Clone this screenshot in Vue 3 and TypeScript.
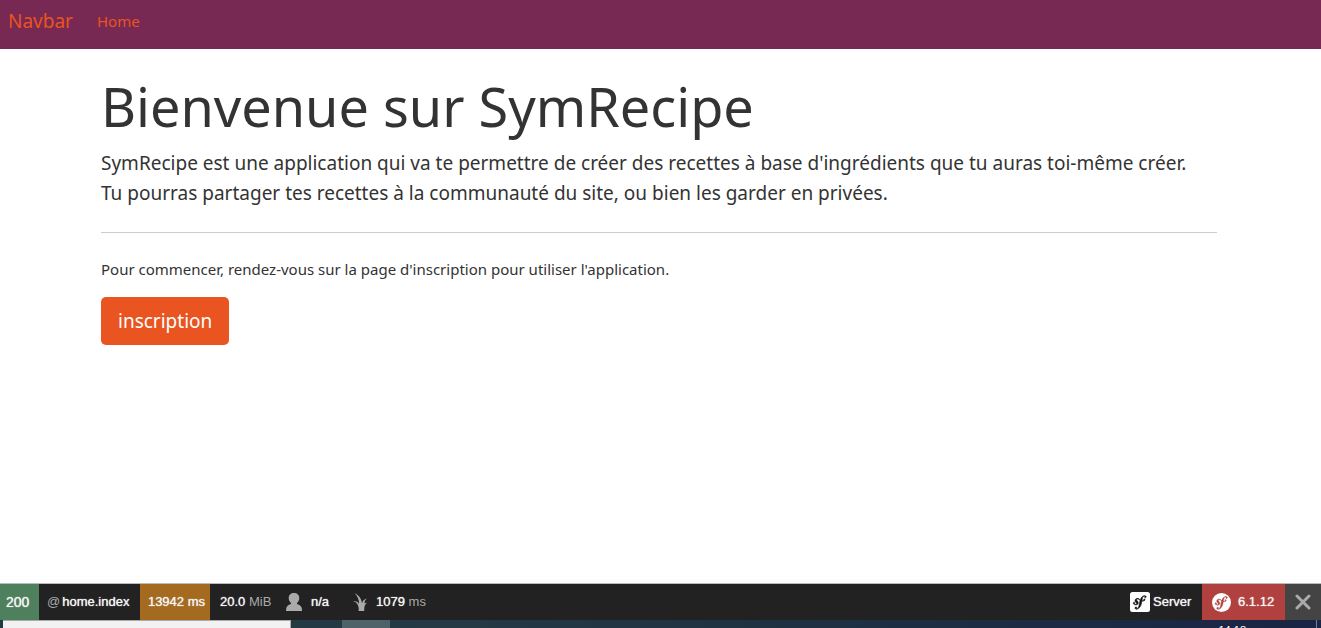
<script setup lang="ts">
const symfonyMark =
  'M17.247 4.439c-1.22.042-2.283.715-3.075 1.644-.878 1.02-1.461 2.229-1.881 3.461-.753-.614-1.332-1.414-2.539-1.761-.966-.297-2.015-.105-2.813.514-.41.319-.71.757-.861 1.254-.36 1.176.381 2.225.719 2.6l.737.79c.15.154.519.56.339 1.138-.193.631-.951 1.037-1.732.799-.348-.106-.848-.366-.734-.73.045-.15.152-.263.21-.391.052-.11.077-.194.095-.242.141-.465-.053-1.07-.551-1.223-.465-.143-.939-.03-1.125.566-.209.68.117 1.913 1.86 2.449 2.04.628 3.765-.484 4.009-1.932.153-.907-.255-1.582-1.006-2.447l-.612-.677c-.371-.37-.497-1.002-.114-1.485.324-.409.785-.584 1.539-.379 1.103.3 1.594 1.063 2.412 1.68-.338 1.11-.56 2.223-.759 3.222l-.123.746c-.585 3.07-1.033 4.757-2.194 5.726-.234.166-.57.416-1.073.434-.266.005-.352-.176-.355-.257-.006-.184.15-.271.255-.353.154-.083.39-.224.372-.674-.016-.532-.456-.994-1.094-.973-.477.017-1.203.465-1.176 1.286.028.85.819 1.485 2.012 1.444.638-.021 2.062-.281 3.464-1.949 1.633-1.911 2.09-4.101 2.434-5.706l.383-2.116c.213.024.441.042.69.048 2.032.044 3.049-1.01 3.064-1.776.01-.464-.304-.921-.744-.91-.386.009-.718.278-.806.654-.094.428.646.813.068 1.189-.41.266-1.146.452-2.184.3l.188-1.042c.386-1.976.859-4.407 2.661-4.467.132-.007.612.006.623.323.003.105-.022.134-.147.375-.115.155-.174.345-.168.537.017.504.4.836.957.816.743-.023.955-.748.945-1.119-.032-.874-.952-1.424-2.17-1.386z'
</script>

<template>
  <div class="page">
    <nav class="navbar">
      <a class="brand" href="#">Navbar</a>
      <a class="nav-link" href="#">Home</a>
    </nav>

    <main class="container">
      <h1>Bienvenue sur SymRecipe</h1>
      <p class="lead">
        SymRecipe est une application qui va te permettre de créer des recettes à base d'ingrédients que tu auras toi-même créer.<br />
        Tu pourras partager tes recettes à la communauté du site, ou bien les garder en privées.
      </p>
      <hr />
      <p class="note">Pour commencer, rendez-vous sur la page d'inscription pour utiliser l'application.</p>
      <a class="btn" href="#">inscription</a>
    </main>

    <footer class="toolbar">
      <a class="block status" href="#">200</a>
      <a class="block route" href="#"><span class="muted">@</span><span>home.index</span></a>
      <a class="block time" href="#">13942 ms</a>
      <a class="block memory" href="#"><span>20.0 <span class="muted">MiB</span></span></a>
      <a class="block user" href="#">
        <svg width="16" height="18" viewBox="0 0 16 18" fill="#aaa">
          <path d="M8 0c3.200 0 5.300 2 5.300 5 0 2.200-1 4-2.300 5v1c3 1 5 2.500 5 6v1H0v-1c0-3.500 2-5 5-6v-1C3.700 9 2.700 7.200 2.700 5c0-3 2.100-5 5.300-5z" />
        </svg>
        <span>n/a</span>
      </a>
      <a class="block twig" href="#">
        <svg width="14" height="18" viewBox="0 0 14 18" fill="#aaa">
          <path d="M5.500 18c.7-3-.1-5.500-1.700-7.500C2.800 9.300 1.600 8.700 0 8.600c2.500-.8 5 .2 6 2.400C6.200 7 4.700 3 1.500 0c4.600 2.500 7.400 6.300 7.400 10.500C9.600 8 11 6.100 14 5.500c-1.800 1.100-2.400 2.800-2.500 5 .5-.5 1.300-.8 2.500-.8-2.400 1.500-3 4.500-2.700 8.300z" />
        </svg>
        <span>1079 <span class="muted">ms</span></span>
      </a>
      <span class="spacer"></span>
      <a class="block server" href="#">
        <svg width="20" height="20" viewBox="0 0 24 24">
          <rect width="24" height="24" rx="3" fill="#fff" />
          <path :d="symfonyMark" fill="#111" stroke="#111" stroke-width="0.7" />
        </svg>
        <span>Server</span>
      </a>
      <a class="block version" href="#">
        <svg width="19" height="19" viewBox="0 0 24 24">
          <circle cx="12" cy="12" r="12" fill="#fff" />
          <path :d="symfonyMark" fill="#b0413e" stroke="#b0413e" stroke-width="0.5" />
        </svg>
        <span>6.1.12</span>
      </a>
      <button class="close" type="button" aria-label="Close Toolbar">
        <svg width="16" height="16" viewBox="0 0 16 16">
          <path d="M2 2l12 12M14 2L2 14" fill="none" stroke="#aaa" stroke-width="3" stroke-linecap="round" />
        </svg>
      </button>
    </footer>

    <div class="taskbar">
      <span class="search"></span>
      <span class="task"></span>
      <span class="clock">14:18</span>
      <span class="edge"></span>
    </div>
  </div>
</template>

<style>
body {
  margin: 0;
  background: #fff;
}
</style>

<style scoped>
.page {
  display: flex;
  flex-direction: column;
  min-height: 100vh;
  color: #333;
  font-family: "Noto Sans", "Open Sans", sans-serif;
}
a {
  text-decoration: none;
}
.navbar {
  display: flex;
  align-items: flex-start;
  gap: 24px;
  box-sizing: border-box;
  height: 49px;
  padding: 6px 8px;
  background: #772953;
}
.navbar a {
  color: #e95420;
  line-height: 30px;
}
.brand {
  font-size: 19px;
}
.nav-link {
  font-size: 15px;
}
.container {
  flex: 1;
  margin: 0 104px 0 101px;
  padding-top: 24px;
}
h1 {
  margin: 0 0 8px;
  font-size: 54px;
  font-weight: 400;
  line-height: 67px;
}
.lead {
  margin: 0;
  font-size: 19px;
  line-height: 30px;
}
hr {
  height: 1px;
  margin: 24px 0;
  border: 0;
  background: #ccc;
}
.note {
  margin: 0 0 16px;
  font-size: 15px;
  line-height: 24px;
}
.btn {
  display: inline-block;
  padding: 9px 17px;
  border-radius: 5px;
  background: #e95420;
  color: #fff;
  font-size: 19px;
  line-height: 30px;
}
.toolbar {
  display: flex;
  height: 36px;
  border-top: 1px solid #bbb;
  background: #222;
  font: 13px/36px "Liberation Sans", Arial, sans-serif;
}
.block {
  display: flex;
  align-items: center;
  box-sizing: border-box;
  color: #f5f5f5;
  text-shadow: 0 0 1px currentColor;
  white-space: nowrap;
}
.muted {
  color: #aaa;
  text-shadow: none;
}
.status {
  width: 39px;
  padding-left: 6px;
  background: #4f805d;
  font-size: 14px;
}
.route {
  width: 101px;
  padding-left: 8px;
  gap: 2px;
}
.time {
  width: 70px;
  padding-right: 5px;
  justify-content: flex-end;
  background: #a46a1f;
}
.memory {
  width: 76px;
  padding-left: 10px;
}
.user {
  width: 67px;
  gap: 9px;
}
.twig {
  gap: 9px;
}
.spacer {
  flex: 1;
}
.server {
  width: 72px;
  gap: 3px;
}
.version {
  width: 83px;
  padding-left: 10px;
  gap: 7px;
  background: #b0413e;
}
.close {
  display: grid;
  place-items: center;
  width: 36px;
  padding: 0;
  border: 0;
  background: #444;
}
.taskbar {
  display: flex;
  height: 8px;
  overflow: hidden;
  background: linear-gradient(90deg, #203a43, #243944 35%, #1e3142 60%, #1a2444);
}
.search {
  width: 287px;
  margin-left: 3px;
  border-top: 1px solid #aaa;
  border-right: 1px solid #aaa;
  background: #f2f2f2;
}
.task {
  width: 48px;
  margin-left: 51px;
  background: #4e626a;
}
.clock {
  margin-left: auto;
  padding-top: 4px;
  color: #fff;
  font: 11px/13px "Liberation Sans", Arial, sans-serif;
}
.edge {
  width: 1px;
  margin: 0 4px 0 70px;
  background: #77809a;
}
</style>
